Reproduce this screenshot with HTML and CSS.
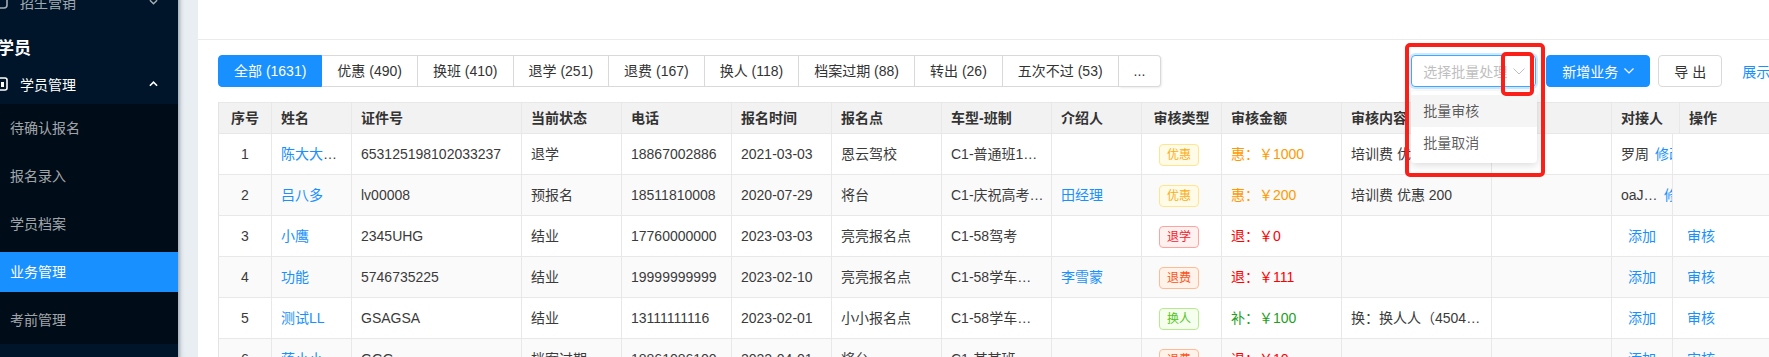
FILE: index.html
```html
<!DOCTYPE html>
<html lang="zh-CN">
<head>
    <meta charset="UTF-8">
    <meta name="viewport" content="width=device-width, initial-scale=1.0">
    <title>业务管理</title>
    <link rel="stylesheet" href="styles.css">
</head>
<body>
<div class="layout">
    <aside class="sider">
        <ul class="menu">
            <li class="menu-title">
                <svg class="menu-icon" viewBox="0 0 14 14"><rect x="1" y="1" width="12" height="12" rx="3" fill="none" stroke="currentColor" stroke-width="1.6"/></svg>
                <span>招生营销</span>
                <svg class="menu-arrow" viewBox="0 0 10 6"><polyline points="1,1 5,5 9,1" fill="none" stroke="currentColor" stroke-width="1.6"/></svg>
            </li>
            <li class="menu-group">学员</li>
            <li class="menu-title menu-title--open">
                <svg class="menu-icon" viewBox="0 0 14 14"><rect x="1" y="1" width="12" height="12" rx="2" fill="none" stroke="currentColor" stroke-width="1.6"/><rect x="7" y="5" width="3" height="5" fill="currentColor"/></svg>
                <span>学员管理</span>
                <svg class="menu-arrow" viewBox="0 0 10 6"><polyline points="1,5 5,1 9,5" fill="none" stroke="currentColor" stroke-width="1.8"/></svg>
            </li>
            <li>
                <ul class="submenu">
                    <li class="submenu-item">待确认报名</li>
                    <li class="submenu-item">报名录入</li>
                    <li class="submenu-item">学员档案</li>
                    <li class="submenu-item submenu-item--active">业务管理</li>
                    <li class="submenu-item">考前管理</li>
                </ul>
            </li>
        </ul>
    </aside>
    <div class="gutter"></div>
    <main class="main">
        <header class="topbar"></header>
        <section class="content">
            <div class="toolbar">
                <div class="tabs">
                    <span class="tab tab--active">全部 (1631)</span>
                    <span class="tab">优惠 (490)</span>
                    <span class="tab">换班 (410)</span>
                    <span class="tab">退学 (251)</span>
                    <span class="tab">退费 (167)</span>
                    <span class="tab">换人 (118)</span>
                    <span class="tab">档案过期 (88)</span>
                    <span class="tab">转出 (26)</span>
                    <span class="tab">五次不过 (53)</span>
                    <span class="tab tab--more">...</span>
                </div>
                <div class="actions">
                    <div class="batch">
                        <div class="select">
                            <span class="select-placeholder">选择批量处理</span>
                            <svg class="select-arrow" viewBox="0 0 12 7"><polyline points="0.5,0.5 6,6 11.5,0.5" fill="none" stroke="currentColor" stroke-width="1"/></svg>
                        </div>
                        <ul class="dropdown">
                            <li class="dropdown-item dropdown-item--hover">批量审核</li>
                            <li class="dropdown-item">批量取消</li>
                        </ul>
                        <div class="mark mark--outer"></div>
                        <div class="mark mark--inner"></div>
                    </div>
                    <button class="btn btn--primary">新增业务
                        <svg class="btn-icon" viewBox="0 0 10 6"><polyline points="0.5,0.5 5,5 9.5,0.5" fill="none" stroke="currentColor" stroke-width="1.2"/></svg>
                    </button>
                    <button class="btn">导 出</button>
                    <a class="link">展示列</a>
                </div>
            </div>

            <div class="table">
                <table class="table-head">
                    <colgroup>
                        <col style="width:54px"><col style="width:80px"><col style="width:170px"><col style="width:100px">
                        <col style="width:110px"><col style="width:100px"><col style="width:110px"><col style="width:110px">
                        <col style="width:90px"><col style="width:80px"><col style="width:120px"><col style="width:150px">
                        <col style="width:120px"><col style="width:68px"><col style="width:120px">
                    </colgroup>
                    <tr>
                        <th class="center">序号</th><th>姓名</th><th>证件号</th><th>当前状态</th>
                        <th>电话</th><th>报名时间</th><th>报名点</th><th>车型-班制</th>
                        <th>介绍人</th><th class="center">审核类型</th><th>审核金额</th><th>审核内容</th>
                        <th>原因</th><th>对接人</th><th>操作</th>
                    </tr>
                </table>
                <table class="table-body">
                    <colgroup>
                        <col style="width:54px"><col style="width:80px"><col style="width:170px"><col style="width:100px">
                        <col style="width:110px"><col style="width:100px"><col style="width:110px"><col style="width:110px">
                        <col style="width:90px"><col style="width:80px"><col style="width:120px"><col style="width:150px">
                        <col style="width:120px"><col style="width:61px"><col style="width:127px">
                    </colgroup>
                    <tr>
                        <td class="center">1</td><td><a class="name">陈大大大大</a></td><td>653125198102033237</td><td>退学</td>
                        <td>18867002886</td><td>2021-03-03</td><td>恩云驾校</td><td>C1-普通班1期学员</td>
                        <td></td><td class="tag-cell"><span class="tag tag--gold">优惠</span></td>
                        <td class="amount amount--gold">惠：￥1000</td><td>培训费 优惠 1000</td><td></td>
                        <td class="contact-cell"><span class="contact">罗周</span><a class="op">修改</a></td><td></td>
                    </tr>
                    <tr>
                        <td class="center">2</td><td><a class="name">吕八多</a></td><td>lv00008</td><td>预报名</td>
                        <td>18511810008</td><td>2020-07-29</td><td>将台</td><td class="tight">C1-庆祝高考特惠班</td>
                        <td><a class="name">田经理</a></td><td class="tag-cell"><span class="tag tag--gold">优惠</span></td>
                        <td class="amount amount--gold">惠：￥200</td><td>培训费 优惠 200</td><td></td>
                        <td class="contact-cell"><span class="contact">oaJx2kq9</span><a class="op">修改</a></td><td></td>
                    </tr>
                    <tr>
                        <td class="center">3</td><td><a class="name">小鹰</a></td><td>2345UHG</td><td>结业</td>
                        <td>17760000000</td><td>2023-03-03</td><td>亮亮报名点</td><td>C1-58驾考</td>
                        <td></td><td class="tag-cell"><span class="tag tag--red">退学</span></td>
                        <td class="amount amount--red">退：￥0</td><td></td><td></td>
                        <td class="center"><a class="op">添加</a></td><td class="op-cell"><a class="op">审核</a></td>
                    </tr>
                    <tr>
                        <td class="center">4</td><td><a class="name">功能</a></td><td>5746735225</td><td>结业</td>
                        <td>19999999999</td><td>2023-02-10</td><td>亮亮报名点</td><td>C1-58学车班（周末）</td>
                        <td><a class="name">李雪蒙</a></td><td class="tag-cell"><span class="tag tag--volcano">退费</span></td>
                        <td class="amount amount--red">退：￥111</td><td></td><td></td>
                        <td class="center"><a class="op">添加</a></td><td class="op-cell"><a class="op">审核</a></td>
                    </tr>
                    <tr>
                        <td class="center">5</td><td><a class="name">测试LL</a></td><td>GSAGSA</td><td>结业</td>
                        <td>13111111116</td><td>2023-02-01</td><td>小小报名点</td><td>C1-58学车班（周末）</td>
                        <td></td><td class="tag-cell"><span class="tag tag--green">换人</span></td>
                        <td class="amount amount--green">补：￥100</td><td>换：换人人（450421199001011234）</td><td></td>
                        <td class="center"><a class="op">添加</a></td><td class="op-cell"><a class="op">审核</a></td>
                    </tr>
                    <tr>
                        <td class="center">6</td><td><a class="name">蒋小小</a></td><td>GGG</td><td>档案过期</td>
                        <td>18861086100</td><td>2022-04-01</td><td>将台</td><td>C1-某某班</td>
                        <td></td><td class="tag-cell"><span class="tag tag--volcano">退费</span></td>
                        <td class="amount amount--red">退：￥10</td><td></td><td></td>
                        <td class="center"><a class="op">添加</a></td><td class="op-cell"><a class="op">审核</a></td>
                    </tr>
                </table>
            </div>
        </section>
    </main>
</div>
</body>
</html>
```

FILE: styles.css
```css
html, body {
    margin: 0;
    overflow: hidden;
}

body {
    font-family: "Liberation Sans", "Noto Sans CJK SC", sans-serif;
    font-size: 14px;
    color: #333;
    background: #fff;
}

ul {
    list-style: none;
    margin: 0;
    padding: 0;
}

.layout {
    display: flex;
    height: 357px;
}

/* sidebar */
.sider {
    width: 178px;
    flex: none;
    background: #001529;
    overflow: hidden;
}

.menu {
    margin-top: -18px;
}

.menu-title {
    display: flex;
    align-items: center;
    height: 40px;
    padding-right: 20px;
    color: rgba(255, 255, 255, 0.65);
}

.menu-title span {
    flex: 1;
}

.menu-title--open {
    color: #fff;
}

.menu-icon {
    width: 14px;
    height: 14px;
    margin-left: -6px;
    margin-right: 12px;
}

.menu-arrow {
    width: 9px;
    height: 6px;
}

.menu-group {
    padding: 15px 0 3px;
    margin-left: -3px;
    line-height: 24px;
    font-size: 17px;
    font-weight: bold;
    color: #fff;
}

.submenu {
    display: flex;
    flex-direction: column;
    gap: 8px;
    padding: 4px 0;
    background: #000c17;
}

.submenu-item {
    height: 40px;
    line-height: 40px;
    padding-left: 10px;
    color: rgba(255, 255, 255, 0.65);
}

.submenu-item--active {
    background: #1890ff;
    color: #fff;
}

.gutter {
    width: 20px;
    flex: none;
    background: linear-gradient(to right, #aab2ba 0, #dfe5eb 4px, #e9eef3 7px);
}

/* main */
.main {
    flex: 1;
    min-width: 0;
    overflow: hidden;
}

.topbar {
    height: 39px;
    border-bottom: 1px solid #ebebeb;
}

.content {
    padding: 15px 20px;
}

.toolbar {
    display: flex;
    align-items: flex-start;
    width: max-content;
    height: 32px;
    margin-bottom: 15px;
}

.tabs {
    display: flex;
}

.tab {
    height: 30px;
    line-height: 30px;
    padding: 0 15px;
    border: 1px solid #d9d9d9;
    border-left: 0;
    color: #333;
    white-space: nowrap;
}

.tab--active {
    border: 1px solid #1890ff;
    background: #1890ff;
    color: #fff;
    border-radius: 4px 0 0 4px;
}

.tab--more {
    border-radius: 0 4px 4px 0;
    box-shadow: 1px 1px 2px rgba(0, 0, 0, 0.08);
}

.actions {
    display: flex;
    align-items: center;
    margin-left: 250px;
}

.batch {
    position: relative;
    margin-right: 10px;
}

.select {
    display: flex;
    align-items: center;
    box-sizing: border-box;
    width: 125px;
    height: 32px;
    padding: 0 11px;
    border: 1px solid #40a9ff;
    border-radius: 4px;
    box-shadow: 0 0 0 2px rgba(24, 144, 255, 0.2);
    overflow: hidden;
}

.select-placeholder {
    flex: none;
    color: #bfbfbf;
    white-space: nowrap;
}

.select-arrow {
    position: absolute;
    right: 11px;
    top: 13px;
    width: 12px;
    height: 7px;
    color: #bfbfbf;
    background: #fff;
    padding-left: 4px;
}

.dropdown {
    position: absolute;
    top: 36px;
    left: 0;
    z-index: 2;
    width: 126px;
    padding: 4px 0;
    background: #fff;
    border-radius: 4px;
    box-shadow: 0 2px 8px rgba(0, 0, 0, 0.15);
}

.dropdown-item {
    height: 32px;
    line-height: 32px;
    padding: 0 12px;
    color: rgba(0, 0, 0, 0.65);
}

.dropdown-item--hover {
    background: #f5f5f5;
}

.mark {
    position: absolute;
    z-index: 3;
    box-sizing: border-box;
    border: 4px solid #fb1f1a;
    border-radius: 5px;
}

.mark--outer {
    left: -6px;
    top: -12px;
    width: 140px;
    height: 134px;
}

.mark--inner {
    left: 90px;
    top: -3px;
    width: 33px;
    height: 44px;
}

.btn {
    display: flex;
    align-items: center;
    gap: 6px;
    height: 32px;
    padding: 0 15px;
    margin-right: 8px;
    border: 1px solid #d9d9d9;
    border-radius: 4px;
    background: #fff;
    color: #333;
    font: inherit;
}

.btn--primary {
    background: #1890ff;
    border-color: #1890ff;
    color: #fff;
}

.btn-icon {
    width: 10px;
    height: 6px;
}

.link {
    margin-left: 12px;
    color: #1890ff;
    white-space: nowrap;
}

/* table */
.table {
    width: max-content;
}

.table table {
    width: 1582px;
    table-layout: fixed;
    border-collapse: separate;
    border-spacing: 0;
}

.table th,
.table td {
    padding: 0 9px;
    text-align: left;
    white-space: nowrap;
    overflow: hidden;
    text-overflow: ellipsis;
    border-right: 1px solid #e8e8e8;
    border-bottom: 1px solid #e8e8e8;
}

.table th:first-child,
.table td:first-child {
    border-left: 1px solid #e3e3e3;
}

.table th {
    line-height: 30px;
    border-top: 1px solid #e8e8e8;
    background: #f2f2f2;
    font-weight: bold;
    color: #333;
}

.table td {
    line-height: 40px;
    color: #3a3a3a;
}

.table-body tr:nth-child(even) td {
    background: #fafafa;
}

.table .center {
    text-align: center;
}

.table .tight {
    padding-right: 4px;
}

.table .name,
.table .op {
    color: #1890ff;
}

.table .tag-cell {
    padding-left: 17px;
}

.tag {
    display: inline-block;
    height: 20px;
    line-height: 20px;
    padding: 0 7px;
    font-size: 12px;
    border: 1px solid;
    border-radius: 4px;
    vertical-align: middle;
}

.tag--gold {
    background: #fffbe6;
    border-color: #ffe58f;
    color: #faad14;
}

.tag--red {
    background: #fff1f0;
    border-color: #ffa39e;
    color: #f5222d;
}

.tag--volcano {
    background: #fff2e8;
    border-color: #ffbb96;
    color: #fa541c;
}

.tag--green {
    background: #f6ffed;
    border-color: #b7eb8f;
    color: #52c41a;
}

.table .amount--gold {
    color: #f90;
}

.table .amount--red {
    color: #f00;
}

.table .amount--green {
    color: #1c9f1c;
}

.table .contact-cell {
    text-overflow: clip;
}

.contact {
    display: inline-block;
    max-width: 37px;
    margin-right: 6px;
    overflow: hidden;
    text-overflow: ellipsis;
    vertical-align: top;
}

.table .op-cell {
    padding-left: 14px;
}
```
